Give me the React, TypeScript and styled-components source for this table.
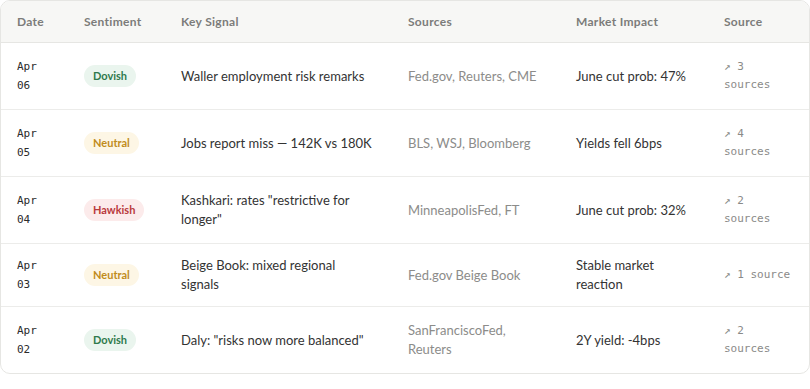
import React from 'react';
import styled, { createGlobalStyle } from 'styled-components';

const GlobalStyle = createGlobalStyle`
  html, body {
    margin: 0;
    padding: 0;
    background: #ffffff;
  }
  body {
    font-family: Lato, "Noto Sans", sans-serif;
  }
`;

type Sentiment = 'Dovish' | 'Neutral' | 'Hawkish';

const sentimentColors: Record<Sentiment, { fg: string; bg: string }> = {
  Dovish: { fg: '#2f7a4c', bg: '#eaf5ee' },
  Neutral: { fg: '#c18c1c', bg: '#fdf6e5' },
  Hawkish: { fg: '#b93a3c', bg: '#fcebeb' },
};

const Wrapper = styled.div`
  width: 810px;
  box-sizing: border-box;
  border: 1px solid #e6e6e3;
  border-radius: 10px;
  overflow: hidden;
  background: #ffffff;
`;

const Table = styled.table`
  width: 100%;
  border-collapse: collapse;
  table-layout: fixed;
`;

const HeadRow = styled.tr`
  background: #f7f7f5;
  border-bottom: 1px solid #e6e6e3;
`;

const Th = styled.th`
  height: 41px;
  padding: 0 16px;
  text-align: left;
  font-size: 12px;
  font-weight: 700;
  color: #7c7c7a;
  letter-spacing: 0.3px;
  vertical-align: middle;
`;

const Row = styled.tr`
  border-bottom: 1px solid #ececea;
  &:last-child {
    border-bottom: none;
  }
`;

const Td = styled.td<{ $muted?: boolean }>`
  padding: 12px 16px;
  font-size: 13px;
  line-height: 19px;
  color: ${(p) => (p.$muted ? '#8c8c8a' : '#333333')};
  vertical-align: middle;
`;

const DateText = styled.div`
  font-family: "DejaVu Sans Mono", "Liberation Mono", monospace;
  font-size: 11px;
  line-height: 19px;
  color: #2b2b2b;
  width: 28px;
`;

const Badge = styled.span<{ $tone: Sentiment }>`
  display: inline-block;
  padding: 3px 9px;
  border-radius: 12px;
  font-size: 11px;
  font-weight: 700;
  line-height: 16px;
  color: ${(p) => sentimentColors[p.$tone].fg};
  background: ${(p) => sentimentColors[p.$tone].bg};
`;

const SourceLink = styled.a`
  display: inline-block;
  padding: 3px 0;
  font-family: "DejaVu Sans Mono", "Liberation Mono", monospace;
  font-size: 11px;
  line-height: 18px;
  color: #8a8a88;
  text-decoration: none;
`;

const rows: {
  month: string;
  day: string;
  sentiment: Sentiment;
  signal: string;
  sources: string;
  impact: string;
  count: number;
}[] = [
  { month: 'Apr', day: '06', sentiment: 'Dovish', signal: 'Waller employment risk remarks', sources: 'Fed.gov, Reuters, CME', impact: 'June cut prob: 47%', count: 3 },
  { month: 'Apr', day: '05', sentiment: 'Neutral', signal: 'Jobs report miss — 142K vs 180K', sources: 'BLS, WSJ, Bloomberg', impact: 'Yields fell 6bps', count: 4 },
  { month: 'Apr', day: '04', sentiment: 'Hawkish', signal: 'Kashkari: rates "restrictive for longer"', sources: 'MinneapolisFed, FT', impact: 'June cut prob: 32%', count: 2 },
  { month: 'Apr', day: '03', sentiment: 'Neutral', signal: 'Beige Book: mixed regional signals', sources: 'Fed.gov Beige Book', impact: 'Stable market reaction', count: 1 },
  { month: 'Apr', day: '02', sentiment: 'Dovish', signal: 'Daly: "risks now more balanced"', sources: 'SanFranciscoFed, Reuters', impact: '2Y yield: -4bps', count: 2 },
];

const columns = [
  { label: 'Date', width: 67 },
  { label: 'Sentiment', width: 97 },
  { label: 'Key Signal', width: 227 },
  { label: 'Sources', width: 168 },
  { label: 'Market Impact', width: 148 },
  { label: 'Source', width: 101 },
];

const App: React.FC = () => {
  return (
    <>
      <GlobalStyle />
      <Wrapper>
        <Table>
          <colgroup>
            {columns.map((c) => (
              <col key={c.label} style={{ width: c.width }} />
            ))}
          </colgroup>
          <thead>
            <HeadRow>
              {columns.map((c) => (
                <Th key={c.label}>{c.label}</Th>
              ))}
            </HeadRow>
          </thead>
          <tbody>
            {rows.map((r) => (
              <Row key={r.day}>
                <Td>
                  <DateText>
                    {r.month} {r.day}
                  </DateText>
                </Td>
                <Td>
                  <Badge $tone={r.sentiment}>{r.sentiment}</Badge>
                </Td>
                <Td>{r.signal}</Td>
                <Td $muted>{r.sources}</Td>
                <Td>{r.impact}</Td>
                <Td>
                  <SourceLink href="#">
                    ↗ {r.count} {r.count === 1 ? 'source' : 'sources'}
                  </SourceLink>
                </Td>
              </Row>
            ))}
          </tbody>
        </Table>
      </Wrapper>
    </>
  );
};

export default App;
